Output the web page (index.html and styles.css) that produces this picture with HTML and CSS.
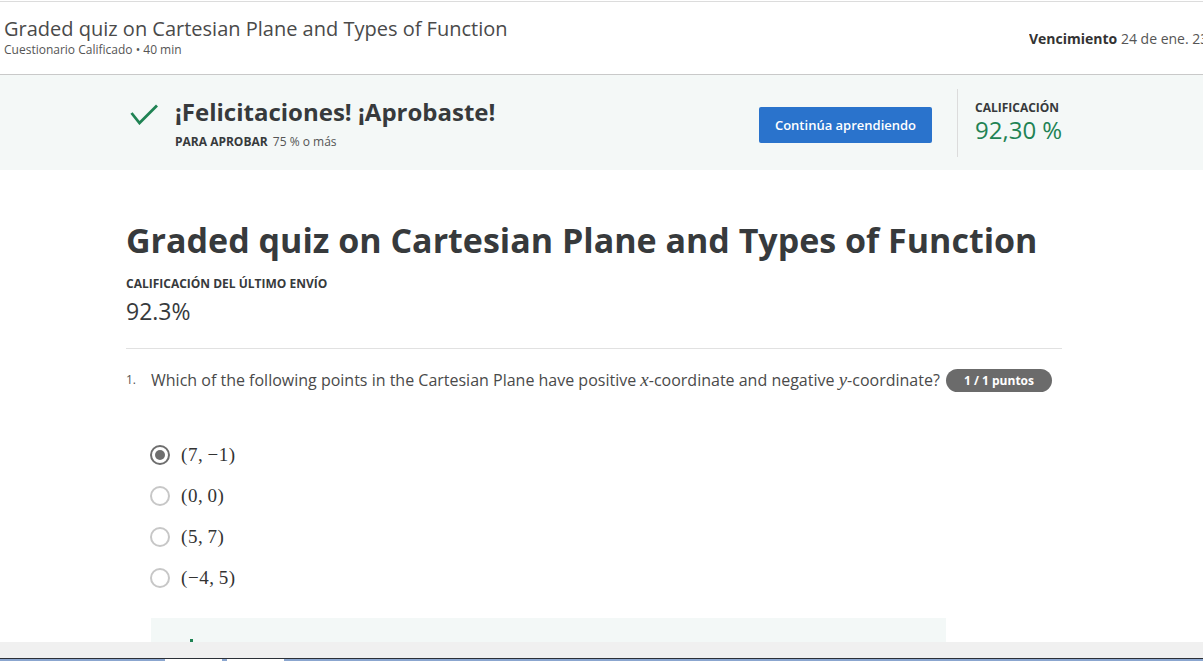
FILE: index.html
```html
<!DOCTYPE html>
<html lang="es">
<head>
<meta charset="utf-8">
<title>Graded quiz on Cartesian Plane and Types of Function</title>
<link rel="stylesheet" href="styles.css">
</head>
<body>
<div class="topline"></div>
<header class="header">
  <div class="header-left">
    <h1 class="header-title">Graded quiz on Cartesian Plane and Types of Function</h1>
    <div class="header-sub">Cuestionario Calificado • 40 min</div>
  </div>
  <div class="header-due"><strong>Vencimiento</strong> 24 de ene. 23:59 CST</div>
</header>

<section class="banner">
  <div class="banner-inner">
    <div class="pass">
      <svg class="pass-icon" width="28" height="21" viewBox="0 0 28 21" aria-hidden="true">
        <polyline points="1.5,9 9.5,19 27,1.5" fill="none" stroke="#1f8354" stroke-width="2.8"/>
      </svg>
      <div class="pass-text">
        <div class="pass-title">¡Felicitaciones! ¡Aprobaste!</div>
        <div class="pass-req"><b>PARA APROBAR</b> 75 % o más</div>
      </div>
    </div>
    <button class="btn">Continúa aprendiendo</button>
    <div class="divider"></div>
    <div class="grade">
      <div class="grade-label">CALIFICACIÓN</div>
      <div class="grade-value">92,30 %</div>
    </div>
  </div>
</section>

<main class="content">
  <h2 class="quiz-title">Graded quiz on Cartesian Plane and Types of Function</h2>
  <div class="label">CALIFICACIÓN DEL ÚLTIMO ENVÍO</div>
  <div class="score">92.3%</div>
  <hr class="sep">
  <div class="question">
    <span class="qnum">1.</span>
    <span class="qtext">Which of the following points in the Cartesian Plane have positive <i class="mv">x</i>-coordinate and negative <i class="mv">y</i>-coordinate?</span>
    <span class="badge">1 / 1 puntos</span>
  </div>
  <ul class="options">
    <li class="option"><span class="radio checked"></span><span class="math">(7,<span class="thin"></span>−1)</span></li>
    <li class="option"><span class="radio"></span><span class="math">(0,<span class="thin"></span>0)</span></li>
    <li class="option"><span class="radio"></span><span class="math">(5,<span class="thin"></span>7)</span></li>
    <li class="option"><span class="radio"></span><span class="math">(−4,<span class="thin"></span>5)</span></li>
  </ul>
  <div class="feedback"><span class="fb-icon"></span></div>
</main>

<div class="bottombar">
  <div class="bar-gray"></div>
  <div class="bar-line"></div>
  <div class="bar-blue">
    <span class="bar-tab"></span>
    <span class="bar-tab"></span>
  </div>
</div>
</body>
</html>
```

FILE: styles.css
```css
html, body {
  margin: 0;
  padding: 0;
  overflow: hidden;
  background: #ffffff;
  font-family: "Open Sans", "Noto Sans", sans-serif;
  color: #373a3c;
}

.topline {
  height: 1px;
  margin-top: 1px;
  background: #dcdcdc;
}

.header {
  display: flex;
  align-items: center;
  height: 72px;
  border-bottom: 1px solid #c9c9c9;
  box-sizing: content-box;
}

.header-left {
  flex: 1;
  align-self: flex-start;
  padding: 13px 0 0 4px;
}

.header-title {
  margin: 0;
  font-size: 20px;
  line-height: 27px;
  font-weight: 400;
  color: #4a4a4a;
}

.header-sub {
  font-size: 12px;
  line-height: 16px;
  color: #555555;
}

.header-due {
  width: 174px;
  flex-shrink: 0;
  white-space: nowrap;
  overflow: hidden;
  font-size: 14px;
  line-height: 20px;
  color: #555555;
  margin-top: 2px;
}

.header-due strong {
  color: #333333;
  font-weight: 700;
}

.banner {
  background: #f4f8f7;
}

.banner-inner {
  margin-left: 126px;
  width: 936px;
  display: flex;
  align-items: flex-start;
  padding: 14px 0 13px;
}

.pass {
  flex: 1;
  display: flex;
  align-items: flex-start;
  padding-top: 7px;
}

.pass-icon {
  display: block;
  margin: 8px 17px 0 4px;
}

.pass-title {
  font-size: 24px;
  line-height: 32px;
  font-weight: 700;
  color: #373a3c;
}

.pass-req {
  margin-top: 6px;
  font-size: 12px;
  line-height: 16px;
  color: #555555;
}

.pass-req b {
  font-size: 12px;
  font-weight: 700;
  color: #373a3c;
  margin-right: 2px;
}

.btn {
  margin-top: 18px;
  width: 173px;
  height: 36px;
  border: none;
  border-radius: 2px;
  background: #2a73cc;
  color: #ffffff;
  font-family: "Open Sans", "Noto Sans", sans-serif;
  font-size: 13px;
  font-weight: 600;
  padding: 0;
  margin-right: 25px;
}

.divider {
  width: 1px;
  height: 68px;
  background: #dcdcdc;
}

.grade {
  width: 87px;
  padding-left: 17px;
  padding-top: 10px;
}

.grade-label {
  font-size: 12px;
  line-height: 17px;
  font-weight: 700;
  color: #373a3c;
}

.grade-value {
  font-size: 24px;
  line-height: 28px;
  color: #1f8354;
  white-space: nowrap;
}

.content {
  margin-left: 126px;
  width: 936px;
  padding-top: 49px;
}

.quiz-title {
  margin: 0;
  font-size: 34px;
  line-height: 42px;
  font-weight: 700;
  color: #373a3c;
  white-space: nowrap;
}

.label {
  margin-top: 15px;
  font-size: 12px;
  line-height: 16px;
  font-weight: 700;
  color: #373a3c;
}

.score {
  margin-top: 4px;
  font-size: 23px;
  line-height: 30px;
  color: #373a3c;
}

.sep {
  margin: 22px 0 0;
  border: none;
  height: 1px;
  background: #e1e1e1;
}

.question {
  margin-top: 19px;
  display: flex;
  align-items: center;
  height: 24px;
  white-space: nowrap;
}

.qnum {
  width: 25px;
  font-size: 12px;
  line-height: 16px;
  color: #555555;
  align-self: flex-start;
  padding-top: 4px;
}

.qtext {
  width: 795px;
  font-size: 16px;
  line-height: 24px;
  color: #4a4a4a;
}

.mv {
  font-family: "Liberation Serif", "DejaVu Serif", serif;
  font-size: 19px;
  font-style: italic;
}

.badge {
  height: 23px;
  width: 106px;
  box-sizing: border-box;
  border-radius: 12px;
  background: #6b6b6b;
  color: #ffffff;
  font-size: 12px;
  font-weight: 700;
  line-height: 23px;
  text-align: center;
}

.options {
  list-style: none;
  margin: 42px 0 0;
  padding: 0 0 0 24px;
}

.option {
  display: flex;
  align-items: center;
  height: 41px;
}

.radio {
  width: 20px;
  height: 20px;
  box-sizing: border-box;
  border: 2px solid #c7c7c7;
  border-radius: 50%;
  display: flex;
  align-items: center;
  justify-content: center;
}

.radio.checked {
  border-color: #6e6e6e;
}

.radio.checked::after {
  content: "";
  width: 10px;
  height: 10px;
  border-radius: 50%;
  background: #6e6e6e;
}

.math {
  margin-left: 11px;
  font-family: "Liberation Serif", "DejaVu Serif", serif;
  font-size: 19px;
  color: #333333;
  letter-spacing: 0.6px;
}

.thin {
  display: inline-block;
  width: 4px;
}

.feedback {
  margin: 20px 0 0 25px;
  width: 795px;
  height: 60px;
  background: #f3f8f7;
  padding: 21px 0 0 39px;
  box-sizing: border-box;
}

.fb-icon {
  display: block;
  width: 3px;
  height: 3px;
  background: #1f8354;
}

.bottombar {
  position: fixed;
  left: 0;
  right: 0;
  bottom: 0;
  height: 19px;
  display: flex;
  flex-direction: column;
}

.bar-gray {
  height: 16px;
  background: #f0f0f0;
}

.bar-line {
  height: 1px;
  background: #2b2f36;
}

.bar-blue {
  height: 2px;
  background: #8ba6cf;
  display: flex;
  gap: 5px;
  padding-left: 165px;
}

.bar-tab {
  width: 57px;
  height: 2px;
  background: #ffffff;
}
```
